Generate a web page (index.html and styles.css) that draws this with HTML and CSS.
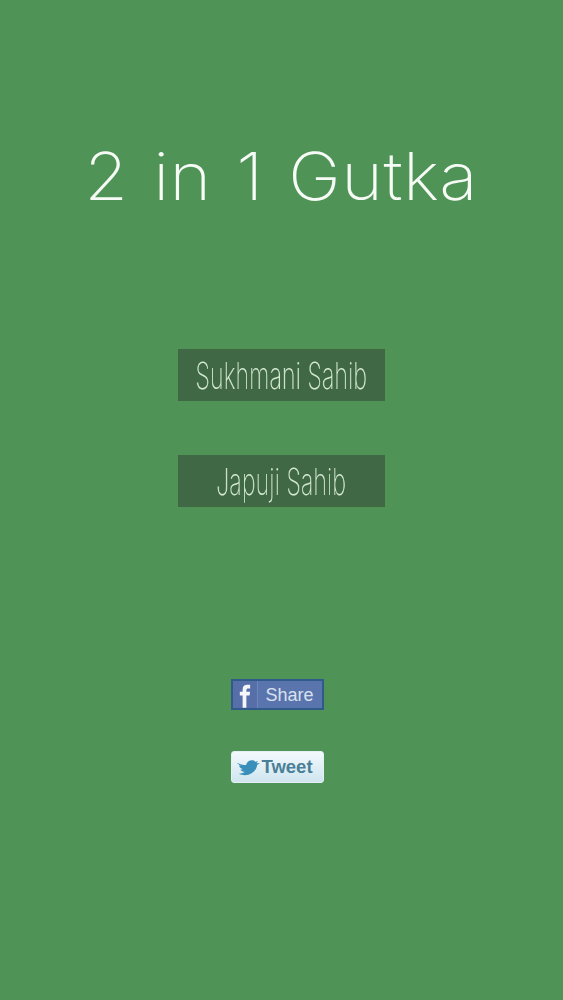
FILE: index.html
```html
<!DOCTYPE html>
<html lang="en">
    <head>
        <meta charset="UTF-8">
        <title>2 in 1 Gutka</title>
        <link rel="stylesheet" href="styles.css">
    </head>
    <body>
        <main class="home">
            <h1 class="home__title">2 in 1 Gutka</h1>
            <nav class="menu">
                <a class="menu__item"><span class="menu__text">Sukhmani Sahib</span></a>
                <a class="menu__item"><span class="menu__text">Japuji Sahib</span></a>
            </nav>
            <div class="social">
                <a class="share">
                    <span class="share__icon">
                        <svg class="share__glyph" viewBox="0 0 16 26" width="15" height="25" aria-hidden="true">
                            <path d="M6 26V13H3V9h3V6.500C6 3 8 1.500 11 1.500h3v4h-2c-1.300 0-2 .5-2 1.800V9h4l-.6 4H10v13z" fill="#f4f6fa"/>
                        </svg>
                    </span>
                    <span class="share__label">Share</span>
                </a>
                <a class="tweet">
                    <svg class="tweet__bird" viewBox="0 0 24 16" width="23" height="17" aria-hidden="true">
                        <path d="M0 3c3 1.500 6 2.500 9.500 2.500C10 2.500 12.500.5 15.500.5c1.500 0 2.700.5 3.500 1.500L22 1.500 20.300 3.500 24 3.500l-3 2C20.500 11 15 16 8.500 16c-2.500 0-4.500-.5-6.500-1.500 2.500 0 4.500-.5 6-2-2-.2-3.500-1-4.500-2.500h2.500C4 9 2.500 8 2 6c.7.300 1.500.4 2.300.4C2.500 5.500 1 4.500 0 3z" fill="#3a8fba"/>
                    </svg>
                    <span class="tweet__label">Tweet</span>
                </a>
            </div>
        </main>
    </body>
</html>
```

FILE: styles.css
```css
html,
body {
    margin: 0;
    padding: 0;
    background-color: #4f9356;
}

.home {
    display: flex;
    flex-direction: column;
    align-items: center;
    min-height: 1000px;
    font-family: Inter, Roboto, sans-serif;
}

.home__title {
    margin: 137px 0 0;
    font-size: 66px;
    font-weight: 200;
    line-height: 78px;
    letter-spacing: 0.4px;
    word-spacing: 4px;
    color: #f6fbf6;
    white-space: nowrap;
    transform: scaleX(1.075);
    will-change: transform;
}

.menu {
    display: flex;
    flex-direction: column;
    gap: 54px;
    margin-top: 134px;
}

.menu__item {
    display: flex;
    align-items: center;
    justify-content: center;
    width: 207px;
    height: 52px;
    background-color: #416844;
}

.menu__text {
    display: inline-block;
    font-size: 37px;
    font-weight: 200;
    color: #d5ead5;
    white-space: nowrap;
    transform: scaleX(0.63);
    will-change: transform;
}

.social {
    display: flex;
    flex-direction: column;
    gap: 41px;
    margin-top: 172px;
    margin-left: -9px;
}

.share {
    display: flex;
    box-sizing: border-box;
    width: 93px;
    height: 31px;
    border: 2px solid #2f5a8a;
    background-color: #5a74ad;
}

.share__icon {
    display: flex;
    align-items: flex-end;
    justify-content: center;
    width: 24px;
    background-color: #566fa8;
    border-right: 1px solid #6f86b8;
}

.share__glyph {
    display: block;
}

.share__label {
    flex: 1;
    font-family: "Liberation Sans", sans-serif;
    font-size: 18px;
    line-height: 29px;
    text-align: center;
    color: #d9e1ee;
}

.tweet {
    display: flex;
    align-items: center;
    gap: 2px;
    box-sizing: border-box;
    width: 93px;
    height: 32px;
    padding-left: 5px;
    border-radius: 3px;
    background-image: linear-gradient(#f3f9fc, #cfe5ef);
    border: 1px solid #e4f0f5;
}

.tweet__label {
    font-family: "Liberation Sans", sans-serif;
    font-size: 18.5px;
    font-weight: 700;
    color: #4a7f98;
}
```
